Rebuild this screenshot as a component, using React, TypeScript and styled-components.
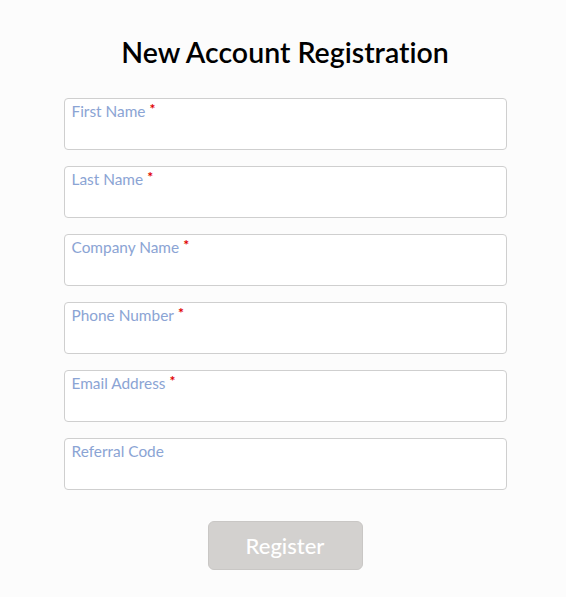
import styled, { createGlobalStyle } from "styled-components";

const GlobalStyle = createGlobalStyle`
  html, body {
    margin: 0;
    padding: 0;
    background: #fcfcfc;
  }
  body {
    font-family: Lato, "Open Sans", sans-serif;
    font-variant-ligatures: none;
  }
`;

type Field = { label: string; required: boolean };

const fields: Field[] = [
  { label: "First Name", required: true },
  { label: "Last Name", required: true },
  { label: "Company Name", required: true },
  { label: "Phone Number", required: true },
  { label: "Email Address", required: true },
  { label: "Referral Code", required: false },
];

function App() {
  return (
    <>
      <GlobalStyle />
      <Page>
        <Title>New Account Registration</Title>
        <Form onSubmit={(e) => e.preventDefault()}>
          {fields.map((f) => (
            <FieldBox key={f.label}>
              <Label>
                {f.label}
                {f.required && <Star>*</Star>}
              </Label>
              <Input type="text" />
            </FieldBox>
          ))}
          <RegisterButton type="submit" disabled>
            Register
          </RegisterButton>
        </Form>
      </Page>
    </>
  );
}

export default App;

const Page = styled.div`
  width: 566px;
  height: 597px;
  box-sizing: border-box;
  padding-top: 34px;
  display: flex;
  flex-direction: column;
  align-items: center;
`;

const Title = styled.h1`
  margin: 0 0 28px 4px;
  font-size: 28.5px;
  line-height: 36px;
  font-weight: 600;
  color: #000;
`;

const Form = styled.form`
  width: 443px;
  margin-left: 4px;
  display: flex;
  flex-direction: column;
  gap: 16px;
`;

const FieldBox = styled.label`
  display: flex;
  flex-direction: column;
  height: 52px;
  box-sizing: border-box;
  border: 1px solid #cfcfcf;
  border-radius: 4px;
  background: #fff;
  padding: 3px 7px 0;
`;

const Label = styled.span`
  font-size: 15.4px;
  line-height: 18px;
  color: #8ba4d4;
`;

const Star = styled.sup`
  color: #e00000;
  font-size: 14px;
  font-weight: 700;
  margin-left: 4px;
  line-height: 0;
  vertical-align: 3px;
`;

const Input = styled.input`
  border: none;
  outline: none;
  background: transparent;
  font: inherit;
  font-size: 15px;
  padding: 4px 0;
`;

const RegisterButton = styled.button`
  align-self: center;
  margin-top: 15px;
  width: 155px;
  height: 49px;
  border: 1px solid #c9c7c5;
  border-radius: 6px;
  background: #d3d1cf;
  color: #fff;
  font-family: inherit;
  font-size: 22px;
  font-weight: 500;
`;
